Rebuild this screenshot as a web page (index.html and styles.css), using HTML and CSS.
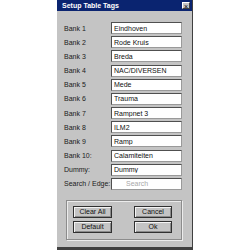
FILE: index.html
```html
<!DOCTYPE html>
<html lang="en">
<head>
    <meta charset="UTF-8">
    <title>Setup Table Tags</title>
    <link rel="stylesheet" href="styles.css">
</head>
<body>
    <div class="dialog">
        <div class="titlebar">
            <span class="title">Setup Table Tags</span>
            <span class="close">&times;</span>
        </div>
        <form class="tags">
            <label for="bank1">Bank 1</label>
            <input type="text" id="bank1" value="Eindhoven">
            <label for="bank2">Bank 2</label>
            <input type="text" id="bank2" value="Rode Kruis">
            <label for="bank3">Bank 3</label>
            <input type="text" id="bank3" value="Breda">
            <label for="bank4">Bank 4</label>
            <input type="text" id="bank4" value="NAC/DIVERSEN">
            <label for="bank5">Bank 5</label>
            <input type="text" id="bank5" value="Mede">
            <label for="bank6">Bank 6</label>
            <input type="text" id="bank6" value="Trauma">
            <label for="bank7">Bank 7</label>
            <input type="text" id="bank7" value="Rampnet 3">
            <label for="bank8">Bank 8</label>
            <input type="text" id="bank8" value="ILM2">
            <label for="bank9">Bank 9</label>
            <input type="text" id="bank9" value="Ramp">
            <label for="bank10">Bank 10:</label>
            <input type="text" id="bank10" value="Calamiteiten">
            <label for="dummy">Dummy:</label>
            <input type="text" id="dummy" value="Dummy">
            <label for="search">Search / Edge:</label>
            <input type="text" id="search" class="search" placeholder="Search">
        </form>
        <div class="buttons">
            <button type="button">Clear All</button>
            <button type="button">Cancel</button>
            <button type="button">Default</button>
            <button type="button">Ok</button>
        </div>
    </div>
</body>
</html>
```

FILE: styles.css
```css
body {
    margin: 0;
    background: #ffffff;
    font-family: "Liberation Sans", Arial, sans-serif;
    font-size: 7px;
}
.dialog {
    width: 135px;
    height: 247px;
    margin-left: 57px;
    background: #c4c4c4;
    border-right: 1px solid #404040;
    border-bottom: 3px solid #404040;
    display: flex;
    flex-direction: column;
}
.titlebar {
    height: 11px;
    background: #0a2470;
    color: #ffffff;
    display: flex;
    align-items: center;
    justify-content: space-between;
    padding: 0 2px 0 5px;
}
.title {
    font-weight: bold;
    font-size: 7px;
}
.close {
    width: 8px;
    height: 7px;
    background: #c4c4c4;
    color: #000000;
    font-size: 7px;
    line-height: 7px;
    text-align: center;
    border-top: 1px solid #ffffff;
    border-left: 1px solid #ffffff;
    border-right: 1px solid #404040;
    border-bottom: 1px solid #404040;
    box-sizing: border-box;
}
.tags {
    display: grid;
    grid-template-columns: 47px 71px;
    grid-auto-rows: 12px;
    row-gap: 2.18px;
    padding: 11px 0 0 7px;
    margin: 0;
}
.tags label {
    align-self: center;
    color: #202020;
    white-space: nowrap;
}
.tags input {
    box-sizing: border-box;
    width: 71px;
    height: 12px;
    margin: 0;
    padding: 0 0 0 2px;
    font-family: inherit;
    font-size: 7px;
    color: #101010;
    background: #ffffff;
    border: 1px solid #505050;
    border-right-color: #9a9a9a;
    border-bottom-color: #9a9a9a;
    outline: none;
}
.tags input.search {
    padding-left: 14px;
}
.tags input::placeholder {
    color: #a8a8a8;
}
.buttons {
    box-sizing: border-box;
    width: 116px;
    height: 40px;
    margin: 10px 0 0 9px;
    padding: 5px 9px 0 6px;
    border: 1px solid #8c8c8c;
    box-shadow: inset 1px 1px 0 #ececec, 1px 1px 0 #ececec;
    display: grid;
    grid-template-columns: 39px 38px;
    justify-content: space-between;
    grid-auto-rows: 12px;
    row-gap: 3px;
}
.buttons button {
    margin: 0;
    padding: 0;
    font-family: inherit;
    font-size: 7px;
    color: #101010;
    background: #c4c4c4;
    border: 1px solid #303030;
    box-shadow: inset 1px 1px 0 #f4f4f4, inset -1px -1px 0 #8a8a8a;
}
```
